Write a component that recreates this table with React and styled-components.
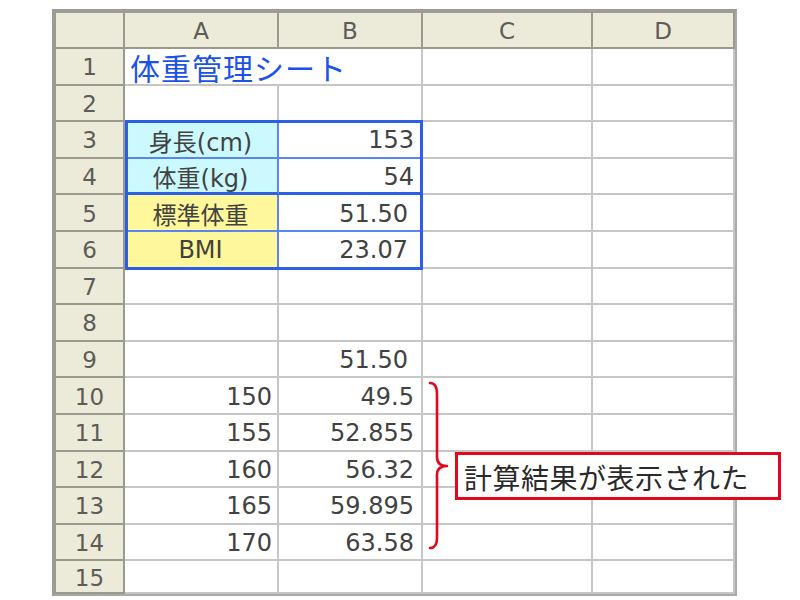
import React from 'react';
import styled, { createGlobalStyle } from 'styled-components';

const GlobalStyle = createGlobalStyle`
  html, body {
    margin: 0;
    padding: 0;
    background: #ffffff;
    overflow: hidden;
  }
  * {
    box-sizing: border-box;
  }
`;

const BLUE = '#2a5fe6';
const BLUE_THIN = '#5a86f2';
const GRID = '#c6c6c6';
const HEAD_LINE = '#9b9a8e';
const RED = '#e3061f';

const Page = styled.div`
  width: 800px;
  height: 600px;
  padding: 9px 0 0 52px;
  font-family: 'DejaVu Sans', 'Noto Sans CJK JP', sans-serif;
`;

const Sheet = styled.div`
  display: grid;
  grid-template-columns: 69px 154px 144px 170px 142px;
  grid-template-rows: 36px repeat(14, 36.6px) 33px;
  width: max-content;
  border-top: 4px solid #9c9b95;
  border-left: 4px solid #9c9b95;
  border-right: 2px solid #a9a9a9;
  border-bottom: 2px solid #a9a9a9;
`;

const HeadCell = styled.div`
  grid-row: ${(p) => p.$row};
  grid-column: ${(p) => p.$col};
  display: flex;
  align-items: center;
  justify-content: center;
  background: #ecebd9;
  color: #5c5c58;
  font-size: 23px;
  border-right: 2px solid ${HEAD_LINE};
  border-bottom: 2px solid ${HEAD_LINE};
  padding-top: 2px;
`;

const Cell = styled.div`
  grid-row: ${(p) => p.$row};
  grid-column: ${(p) => p.$col};
  display: flex;
  align-items: center;
  justify-content: ${(p) =>
    p.$align === 'center' ? 'center' : p.$align === 'left' ? 'flex-start' : 'flex-end'};
  padding: 2px ${(p) => p.$pad ?? 7}px 0 4px;
  background: ${(p) => p.$fill || '#ffffff'};
  color: #424242;
  font-size: 24px;
  white-space: nowrap;
  border-right: ${(p) => (p.$noRight ? '0' : `2px solid ${p.$rightColor || GRID}`)};
  border-bottom: ${(p) => p.$bottomWidth || 2}px solid ${(p) => p.$bottomColor || GRID};
  overflow: visible;
`;

const Title = styled.span`
  color: #1c52e8;
  font-family: 'Noto Sans CJK JP', sans-serif;
  font-size: 30px;
  letter-spacing: 1px;
  margin-left: 1px;
  position: relative;
  z-index: 2;
`;

const RangeFrame = styled.div`
  grid-column: 2 / 4;
  grid-row: 4 / 8;
  margin-top: -2px;
  margin-bottom: -1px;
  border: 3px solid ${BLUE};
  pointer-events: none;
  z-index: 1;
`;

const BraceHolder = styled.div`
  grid-column: 4 / 5;
  grid-row: 11 / 16;
  align-self: start;
  justify-self: start;
  margin-top: -2px;
  z-index: 1;
`;

const Callout = styled.div`
  grid-column: 4 / 5;
  grid-row: 13 / 14;
  align-self: start;
  justify-self: start;
  margin-left: 32px;
  width: 326px;
  height: 48px;
  border: 3px solid ${RED};
  background: #ffffff;
  display: flex;
  align-items: center;
  padding: 2px 0 0 6px;
  font-family: 'Noto Sans CJK JP', sans-serif;
  font-size: 28px;
  letter-spacing: 0.5px;
  color: #2a2a2a;
  z-index: 2;
`;

const cyan = '#ccf9fe';
const yellow = '#fff79b';

const rows = [
  { a: { title: '体重管理シート' } },
  {},
  {
    a: { text: '身長(cm)', fill: cyan, align: 'center', rightColor: BLUE_THIN, bottomColor: BLUE_THIN },
    b: { text: '153', bottomColor: BLUE_THIN },
  },
  {
    a: { text: '体重(kg)', fill: cyan, align: 'center', rightColor: BLUE_THIN, bottomColor: BLUE, bottomWidth: 3 },
    b: { text: '54', bottomColor: BLUE, bottomWidth: 3 },
  },
  {
    a: { text: '標準体重', fill: yellow, align: 'center', rightColor: BLUE_THIN, bottomColor: BLUE_THIN },
    b: { text: '51.50', pad: 13, bottomColor: BLUE_THIN },
  },
  {
    a: { text: 'BMI', fill: yellow, align: 'center', rightColor: BLUE_THIN },
    b: { text: '23.07', pad: 13 },
  },
  {},
  {},
  { b: { text: '51.50', pad: 13 } },
  { a: { text: '150' }, b: { text: '49.5' } },
  { a: { text: '155' }, b: { text: '52.855' } },
  { a: { text: '160' }, b: { text: '56.32' } },
  { a: { text: '165' }, b: { text: '59.895' } },
  { a: { text: '170' }, b: { text: '63.58' } },
  {},
];

const renderCell = (c, row, col, defPad) => {
  const key = `${row}-${col}`;
  if (!c) return <Cell key={key} $row={row} $col={col} />;
  if (c.title) {
    return (
      <Cell key={key} $row={row} $col={col} $align="left" $noRight>
        <Title>{c.title}</Title>
      </Cell>
    );
  }
  return (
    <Cell
      key={key}
      $row={row}
      $col={col}
      $align={c.align}
      $fill={c.fill}
      $pad={c.pad ?? defPad}
      $rightColor={c.rightColor}
      $bottomColor={c.bottomColor}
      $bottomWidth={c.bottomWidth}
    >
      {c.text}
    </Cell>
  );
};

const Brace = () => (
  <svg width="30" height="180" viewBox="0 0 30 180">
    <path
      d="M7 7 Q14 7 14 18 L14 81 Q14 90 24 90 Q14 90 14 99 L14 162 Q14 172 7 172"
      fill="none"
      stroke={RED}
      strokeWidth="2.6"
      strokeLinecap="round"
      strokeLinejoin="round"
    />
  </svg>
);

const App = () => (
  <Page>
    <GlobalStyle />
    <Sheet>
      <HeadCell $row={1} $col={1} />
      {['A', 'B', 'C', 'D'].map((l, j) => (
        <HeadCell key={l} $row={1} $col={j + 2}>
          {l}
        </HeadCell>
      ))}
      {rows.map((r, i) => (
        <React.Fragment key={i}>
          <HeadCell $row={i + 2} $col={1}>
            {i + 1}
          </HeadCell>
          {renderCell(r.a, i + 2, 2, 5)}
          {renderCell(r.b, i + 2, 3, 7)}
          {renderCell(null, i + 2, 4)}
          {renderCell(null, i + 2, 5)}
        </React.Fragment>
      ))}
      <RangeFrame />
      <BraceHolder>
        <Brace />
      </BraceHolder>
      <Callout>計算結果が表示された</Callout>
    </Sheet>
  </Page>
);

export default App;
